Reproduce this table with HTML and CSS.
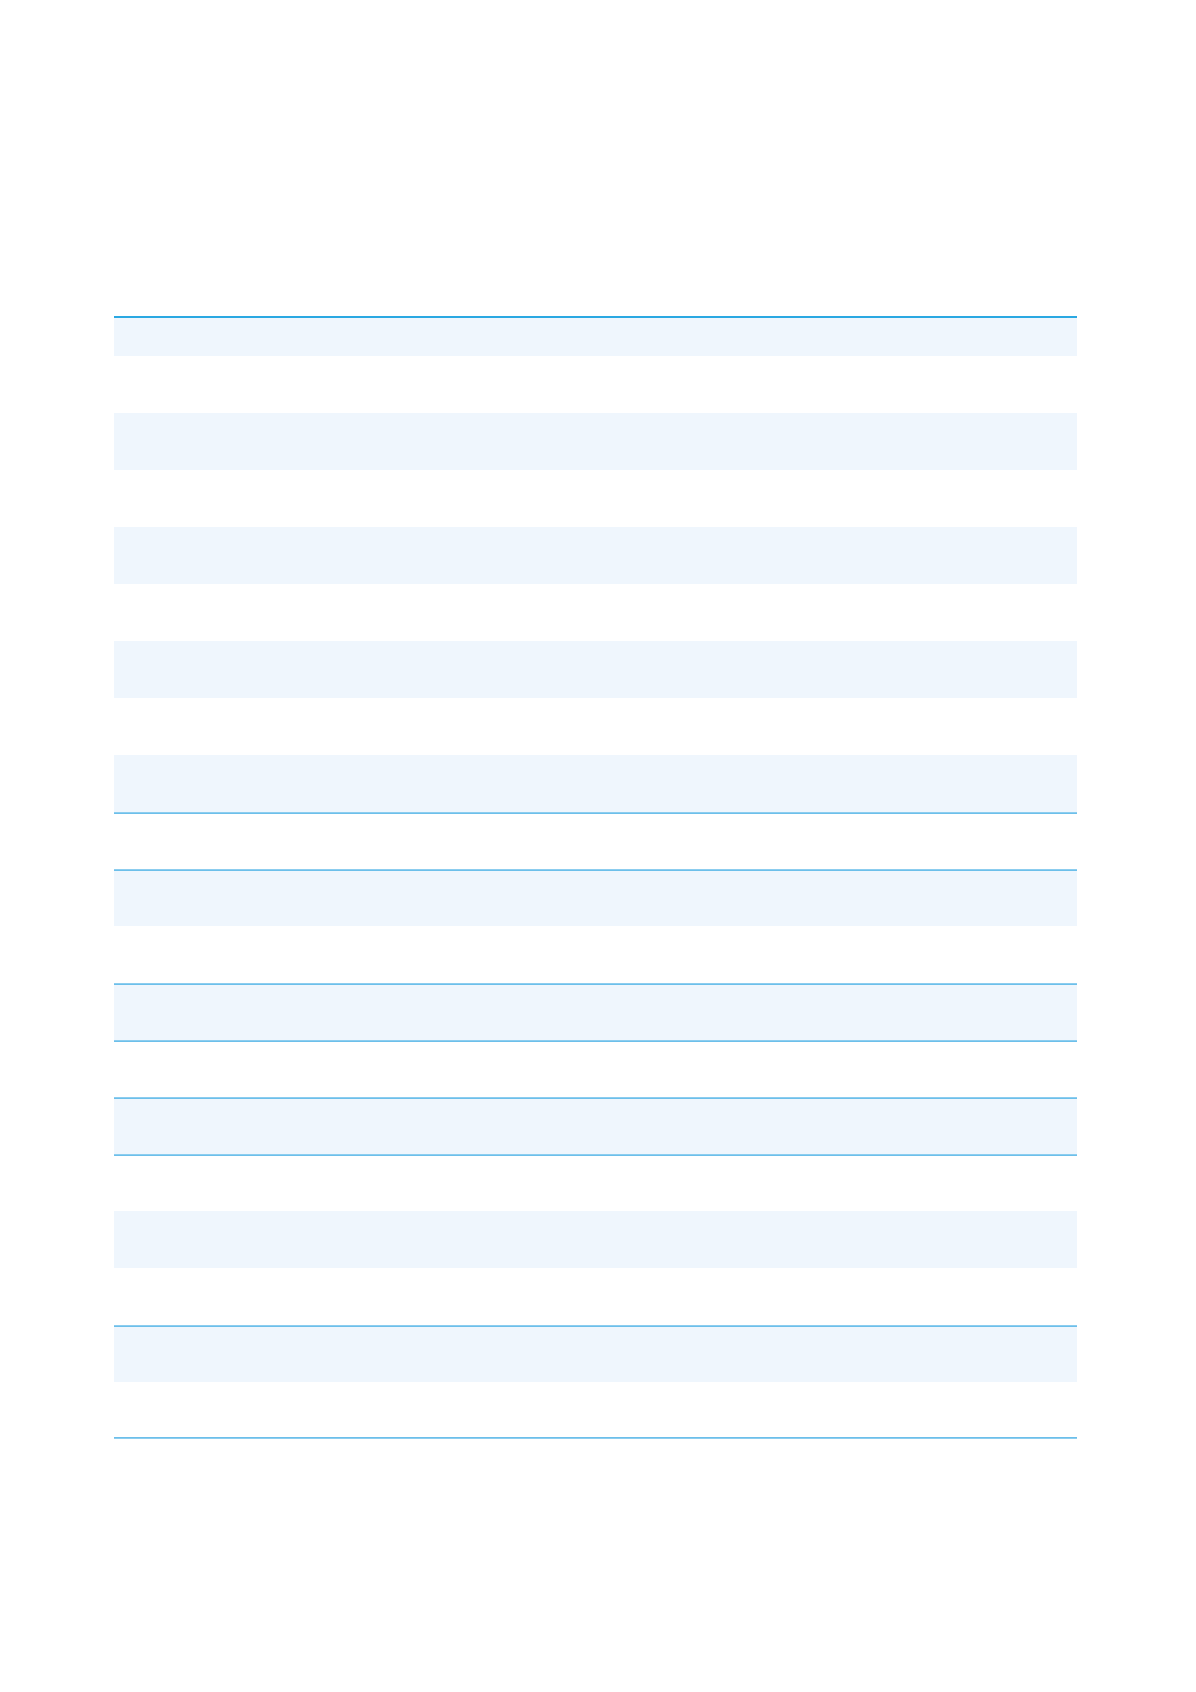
FILE: index.html
```html
<!DOCTYPE html>
<html lang="en">
<head>
<meta charset="utf-8">
<title>Table</title>
<link rel="stylesheet" href="styles.css">
</head>
<body>
<main class="page">
  <table class="grid">
    <colgroup>
      <col class="c1"><col class="c2"><col class="c3"><col class="c4"><col class="c5"><col class="c6">
    </colgroup>
    <thead>
      <tr class="head"><th></th><th></th><th></th><th></th><th></th><th></th></tr>
    </thead>
    <tbody>
      <tr><td></td><td></td><td></td><td></td><td></td><td></td></tr>
      <tr class="alt"><td></td><td></td><td></td><td></td><td></td><td></td></tr>
      <tr><td></td><td></td><td></td><td></td><td></td><td></td></tr>
      <tr class="alt"><td></td><td></td><td></td><td></td><td></td><td></td></tr>
      <tr><td></td><td></td><td></td><td></td><td></td><td></td></tr>
      <tr class="alt"><td></td><td></td><td></td><td></td><td></td><td></td></tr>
      <tr><td></td><td></td><td></td><td></td><td></td><td></td></tr>
      <tr class="alt"><td></td><td></td><td></td><td></td><td></td><td></td></tr>
      <tr class="sep"><td></td><td></td><td></td><td></td><td></td><td></td></tr>
      <tr class="alt sep"><td></td><td></td><td></td><td></td><td></td><td></td></tr>
      <tr><td></td><td></td><td></td><td></td><td></td><td></td></tr>
      <tr class="alt sep"><td></td><td></td><td></td><td></td><td></td><td></td></tr>
      <tr class="sep"><td></td><td></td><td></td><td></td><td></td><td></td></tr>
      <tr class="alt sep"><td></td><td></td><td></td><td></td><td></td><td></td></tr>
      <tr class="sep"><td></td><td></td><td></td><td></td><td></td><td></td></tr>
      <tr class="alt"><td></td><td></td><td></td><td></td><td></td><td></td></tr>
      <tr><td></td><td></td><td></td><td></td><td></td><td></td></tr>
      <tr class="alt sep"><td></td><td></td><td></td><td></td><td></td><td></td></tr>
      <tr class="last"><td></td><td></td><td></td><td></td><td></td><td></td></tr>
    </tbody>
  </table>
</main>
</body>
</html>
```
FILE: styles.css
```css
html, body {
  margin: 0;
  padding: 0;
  background: #ffffff;
  font-family: "Liberation Sans", Arial, sans-serif;
}

.page {
  padding: 316px 119px 253px 114px;
}

.grid {
  width: 963px;
  table-layout: fixed;
  border-collapse: separate;
  border-spacing: 0;
}

.c1 { width: 342px; }
.c2 { width: 125px; }
.c3 { width: 114px; }
.c4 { width: 143px; }
.c5 { width: 114px; }
.c6 { width: 125px; }

.grid th,
.grid td {
  padding: 0;
  height: 57px;
  box-sizing: border-box;
}

.head th {
  height: 40px;
  background: #eff6fd;
  box-shadow: inset 0 2px 0 #2aa8e2;
}

.alt td {
  background: #eff6fd;
}

.sep td {
  box-shadow: inset 0 1px 0 #8ccdef, inset 0 2px 0 #6cbfea;
}

.last td {
  box-shadow: inset 0 -1px 0 #8ccdef, inset 0 -2px 0 #6cbfea;
}
```
